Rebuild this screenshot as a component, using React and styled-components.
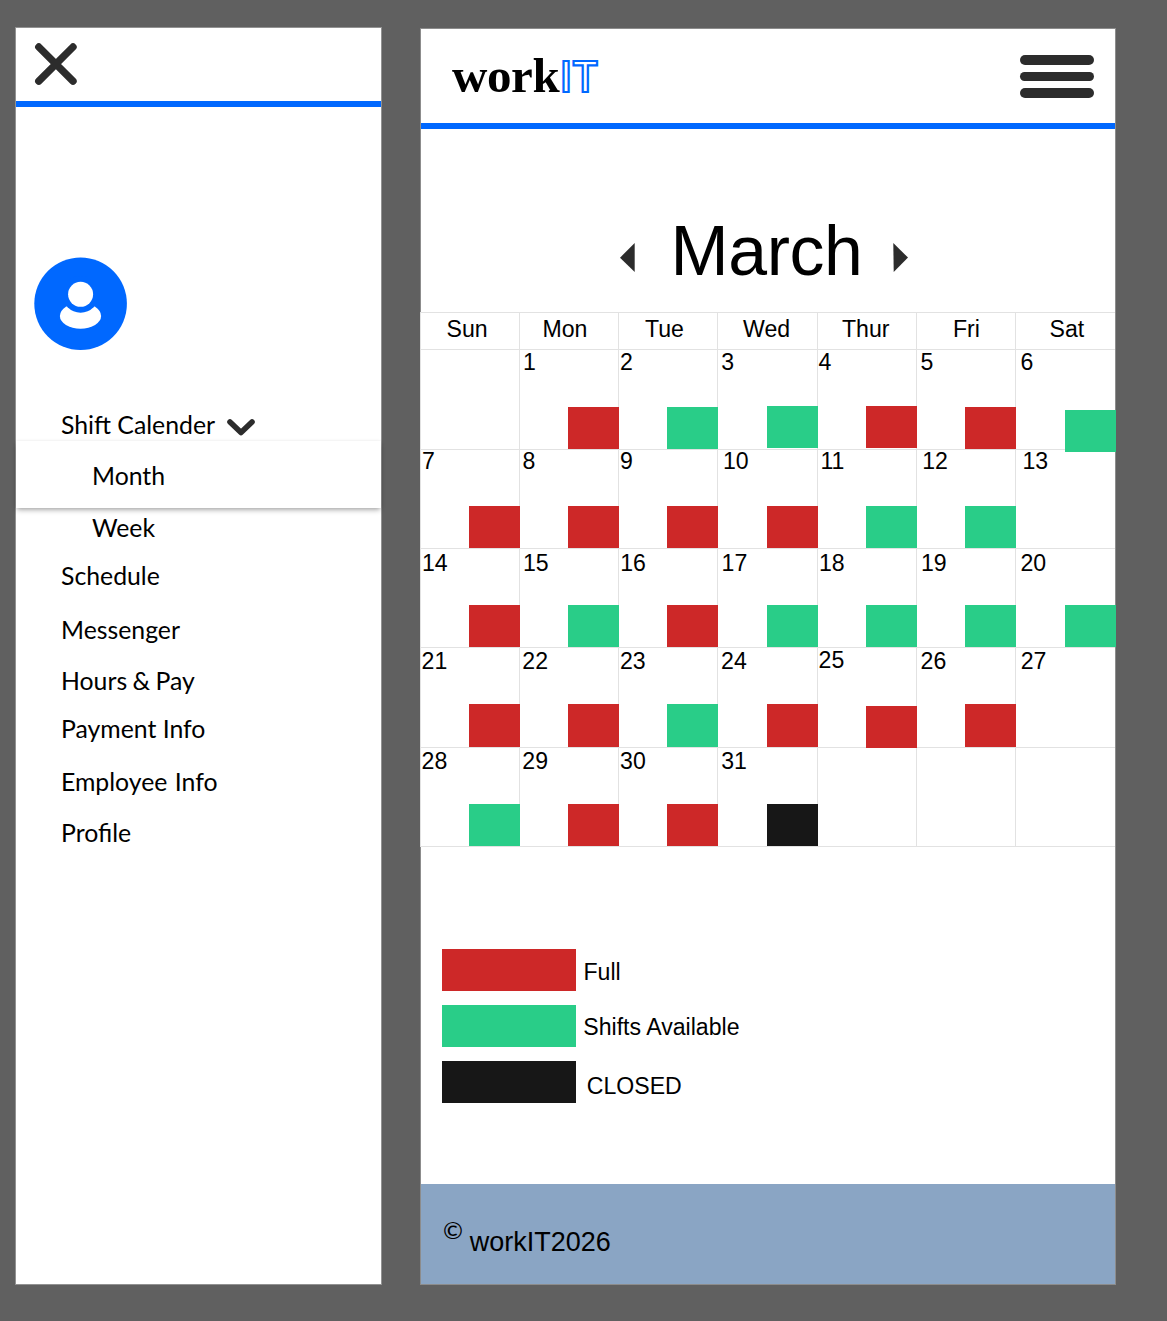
import React from 'react';
import styled, { createGlobalStyle } from 'styled-components';

const color = {
  page: '#606060',
  blue: '#0068ff',
  full: '#cd2828',
  open: '#29cd88',
  closed: '#171717',
  icon: '#2c2c2c',
  line: '#e2e2e2',
  footer: '#8aa5c4',
};

const GlobalStyle = createGlobalStyle`
  * { box-sizing: border-box; }
  body { margin: 0; background: ${color.page}; color: #000; font-family: "Liberation Sans", Arial, sans-serif; }
`;

const Page = styled.div`
  display: flex;
  align-items: flex-start;
  height: 1321px;
  padding: 27px 0 0 15px;
  overflow: hidden;
`;

const Sidebar = styled.aside`
  width: 367px;
  height: 1258px;
  border: 1px solid #929292;
  background: #fff;
`;

const SidebarHeader = styled.header`
  height: 79px;
  border-bottom: 6px solid ${color.blue};
  padding: 14px 0 0 18px;
`;

const Icon = styled.svg`
  display: block;
  flex: none;
`;

const Avatar = styled.div`
  padding: 150px 0 0 18px;
  height: 302px;
`;

const Menu = styled.nav`
  display: flex;
  flex-direction: column;
  font: 24.8px/32px Lato, Carlito, sans-serif;
`;

const MenuItem = styled.a`
  display: flex;
  height: 30px;
  margin-top: ${(p) => p.$gap || 0}px;
  padding-left: ${(p) => (p.$nested ? 76 : 45)}px;
  word-spacing: ${(p) => p.$wordGap || 0}px;
  white-space: nowrap;
`;

const ActiveCard = styled.div`
  height: 67px;
  margin-top: 2px;
  padding-top: 19px;
  background: #fff;
  box-shadow: 0 3px 5px -1px rgba(0, 0, 0, 0.32), 0 0 3px rgba(0, 0, 0, 0.08);
`;

const Chevron = styled(Icon)`
  margin: 8px 0 0 11px;
`;

const Main = styled.main`
  display: flex;
  flex-direction: column;
  width: 696px;
  height: 1257px;
  margin: 1px 0 0 38px;
  border: 1px solid #8c8c8c;
  background: #fff;
`;

const TopBar = styled.header`
  display: flex;
  flex: none;
  justify-content: space-between;
  height: 100px;
  border-bottom: 6px solid ${color.blue};
  padding: 0 21px 0 31px;
`;

const Logo = styled.div`
  display: flex;
  align-items: baseline;
  height: 60px;
  margin-top: 16px;
  line-height: 60px;
`;

const LogoWord = styled.span`
  font: bold 49px/60px "Liberation Serif", serif;
  letter-spacing: -0.4px;
`;

const LogoMark = styled.span`
  font: 600 44px/60px "Open Sans", sans-serif;
  color: transparent;
  -webkit-text-stroke: 2.2px ${color.blue};
`;

const Burger = styled.div`
  display: flex;
  flex-direction: column;
  gap: 7px;
  width: 74px;
  margin-top: 26px;
`;

const BurgerBar = styled.i`
  height: 9.7px;
  border-radius: 5px;
  background: ${color.icon};
`;

const MonthBar = styled.div`
  display: flex;
  flex: none;
  height: 183px;
  padding: 82px 0 0 199px;
`;

const MonthName = styled.h1`
  width: 193px;
  margin: 0 29.4px 0 35.6px;
  font-size: 69.8px;
  line-height: 80px;
  font-weight: normal;
  letter-spacing: -0.4px;
`;

const Arrow = styled(Icon)`
  margin-top: 32px;
`;

const Calendar = styled.div`
  display: grid;
  flex: none;
  grid-template-columns: 99px 99px 99px 100px 99px 99px 100px;
  grid-template-rows: 37px 100px 99px 99px 100px 99px;
  width: 695px;
  margin-left: -1px;
  border-bottom: 1px solid ${color.line};
  font-size: 23.1px;
  line-height: 24px;
`;

const Cell = styled.div`
  display: flex;
  flex-direction: column;
  border: solid ${color.line};
  border-width: 1px 0 0 1px;
`;

const DayName = styled.span`
  margin: 4px 0 0 ${(p) => p.$indent + 0.5}px;
`;

const DayNumber = styled.span`
  height: 24px;
  margin: ${(p) => p.$drop}px 0 0 ${(p) => p.$indent + 0.4}px;
`;

const Status = styled.span`
  position: relative;
  z-index: 1;
  align-self: flex-end;
  width: 51px;
  height: ${(p) => p.$tall}px;
  margin: auto -1px ${(p) => -p.$sink}px 0;
  background: ${(p) => color[p.$kind]};
`;

const Legend = styled.div`
  display: flex;
  flex-direction: column;
  flex: none;
  gap: 14px;
  padding: 102px 0 0 21px;
  height: 337px;
  font-size: 23.1px;
  line-height: 24px;
`;

const LegendRow = styled.div`
  display: flex;
  height: 42px;
`;

const LegendSwatch = styled.span`
  width: 134px;
  background: ${(p) => color[p.$kind]};
`;

const LegendLabel = styled.span`
  margin: ${(p) => p.$drop}px 0 0 ${(p) => p.$indent}px;
`;

const Footer = styled.footer`
  display: flex;
  flex: 1;
  padding: 34px 0 0 22px;
  background: ${color.footer};
`;

const Copyright = styled.span`
  width: 26.8px;
  font: 24px/24px Lato, sans-serif;
`;

const FooterText = styled.span`
  margin-top: 9px;
  font-size: 27px;
  line-height: 30px;
`;

const dayNames = [
  ['Sun', 25], ['Mon', 22], ['Tue', 25.5], ['Wed', 24.5], ['Thur', 23.5], ['Fri', 35.5], ['Sat', 33],
];

// [day, indent, drop, status, sink]
const weeks = [
  [[], [1, 2.5, 0, 'full', 0], [2, 0.6, 0, 'open', 0], [3, 2.8, 0, 'open', -1], [4, 0.2, 0, 'full', -1], [5, 3.2, 0, 'full', 0], [6, 4, 0, 'open', 3]],
  [[7, 0.5, -1, 'full', 0], [8, 2.2, -1, 'full', 0], [9, 0.6, -1, 'full', 0], [10, 4.5, -1, 'full', 0], [11, 2, -1, 'open', 0], [12, 4.8, -1, 'open', 0], [13, 6, -1]],
  [[14, 0.5, 2, 'full', 0], [15, 2.5, 2, 'open', 0], [16, 0.8, 2, 'full', 0], [17, 3.2, 2, 'open', 0], [18, 0.5, 2, 'open', 0], [19, 3.5, 2, 'open', 0], [20, 4, 2, 'open', 0]],
  [[21, 0.2, 1, 'full', 0], [22, 1.9, 1, 'full', 0], [23, 0.6, 1, 'open', 0], [24, 2.7, 1, 'full', 0], [25, 0.2, 0, 'full', 1], [26, 3.2, 1, 'full', 0], [27, 4.3, 1]],
  [[28, 0.2, 1, 'open', 0], [29, 1.9, 1, 'full', 0], [30, 0.7, 1, 'full', 0], [31, 2.8, 1, 'closed', 0], [], [], []],
];

export default function App() {
  return (
    <>
      <GlobalStyle />
      <Page>
        <Sidebar>
          <SidebarHeader>
            <Icon width="44" height="44" viewBox="0 0 44 44" fill="none" stroke={color.icon} strokeWidth="7.4" strokeLinecap="round">
              <path d="M4.8 5 L39 39.2 M39 5 L4.8 39.2" />
            </Icon>
          </SidebarHeader>
          <Avatar>
            <Icon width="94" height="94" viewBox="0 0 94 94">
              <circle cx="46.6" cy="46.7" r="46.3" fill={color.blue} />
              <ellipse cx="46.5" cy="58.9" rx="20.6" ry="12.9" fill="#fff" />
              <circle cx="46.6" cy="37.3" r="18.4" fill={color.blue} />
              <circle cx="46.6" cy="37.3" r="12.5" fill="#fff" />
            </Icon>
          </Avatar>
          <Menu>
            <MenuItem>
              Shift Calender
              <Chevron width="30" height="22" viewBox="0 0 30 22" fill="none" stroke={color.icon} strokeWidth="5.6" strokeLinecap="round" strokeLinejoin="round">
                <path d="M4 5 L15 15.6 L26 5" />
              </Chevron>
            </MenuItem>
            <ActiveCard>
              <MenuItem $nested>Month</MenuItem>
            </ActiveCard>
            <MenuItem $nested $gap={4}>Week</MenuItem>
            <MenuItem $gap={18}>Schedule</MenuItem>
            <MenuItem $gap={24}>Messenger</MenuItem>
            <MenuItem $gap={21} $wordGap={-1}>Hours &amp; Pay</MenuItem>
            <MenuItem $gap={18}>Payment Info</MenuItem>
            <MenuItem $gap={23} $wordGap={1}>Employee Info</MenuItem>
            <MenuItem $gap={21}>Profile</MenuItem>
          </Menu>
        </Sidebar>
        <Main>
          <TopBar>
            <Logo>
              <LogoWord>work</LogoWord>
              <LogoMark>IT</LogoMark>
            </Logo>
            <Burger>
              <BurgerBar />
              <BurgerBar />
              <BurgerBar />
            </Burger>
          </TopBar>
          <MonthBar>
            <Arrow width="15" height="30" viewBox="0 0 15 30" fill={color.icon}>
              <path d="M0 14.7 L14.7 0 V29 Z" />
            </Arrow>
            <MonthName>March</MonthName>
            <Arrow width="16" height="30" viewBox="0 0 16 30" fill={color.icon}>
              <path d="M0.3 0 L15 14.6 L0.7 29 Z" />
            </Arrow>
          </MonthBar>
          <Calendar>
            {dayNames.map(([name, indent]) => (
              <Cell key={name}>
                <DayName $indent={indent}>{name}</DayName>
              </Cell>
            ))}
            {weeks.map((week, w) =>
              week.map(([day, indent, drop, kind, sink], d) => (
                <Cell key={`${w}-${d}`}>
                  {day && <DayNumber $indent={indent} $drop={drop}>{day}</DayNumber>}
                  {kind && <Status $kind={kind} $sink={sink} $tall={w === 3 && !sink ? 43 : 42} />}
                </Cell>
              ))
            )}
          </Calendar>
          <Legend>
            <LegendRow>
              <LegendSwatch $kind="full" />
              <LegendLabel $indent={7.5} $drop={11}>Full</LegendLabel>
            </LegendRow>
            <LegendRow>
              <LegendSwatch $kind="open" />
              <LegendLabel $indent={7.3} $drop={10}>Shifts Available</LegendLabel>
            </LegendRow>
            <LegendRow>
              <LegendSwatch $kind="closed" />
              <LegendLabel $indent={10.8} $drop={13}>CLOSED</LegendLabel>
            </LegendRow>
          </Legend>
          <Footer>
            <Copyright>©</Copyright>
            <FooterText>workIT2026</FooterText>
          </Footer>
        </Main>
      </Page>
    </>
  );
}
